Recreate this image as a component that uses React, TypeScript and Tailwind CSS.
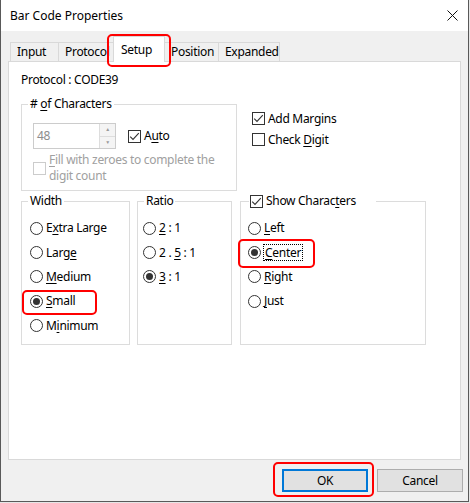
import type { ReactNode } from "react";

const CheckBox = ({ checked = false, disabled = false }: { checked?: boolean; disabled?: boolean }) => (
  <span
    className={`flex h-[13px] w-[13px] shrink-0 items-center justify-center border bg-white ${
      disabled ? "border-[#cccccc]" : "border-[#333333]"
    }`}
  >
    {checked && (
      <svg width="11" height="11" viewBox="0 0 11 11">
        <polyline points="1.2,5.6 4,8.4 9.8,2.2" fill="none" stroke="#333" strokeWidth="1.1" />
      </svg>
    )}
  </span>
);

const Radio = ({ on = false }: { on?: boolean }) => (
  <span className="flex h-[13px] w-[13px] shrink-0 items-center justify-center rounded-full border border-[#333333] bg-white">
    {on && <span className="h-[7px] w-[7px] rounded-full bg-[#333333]" />}
  </span>
);

const U = ({ children }: { children: ReactNode }) => (
  <span className="underline decoration-1 underline-offset-[2px]">{children}</span>
);

const RadioRow = ({ on, children }: { on?: boolean; children: ReactNode }) => (
  <div className="flex h-[24.4px] items-center gap-[3px]">
    <Radio on={on} />
    <span>{children}</span>
  </div>
);

const RedBox = ({ className }: { className: string }) => (
  <div className={`pointer-events-none absolute rounded-[5px] border-2 border-[#ff0000] ${className}`} />
);

const Tab = ({ label, className }: { label: string; className: string }) => (
  <div
    className={`flex h-[19px] items-center overflow-hidden whitespace-nowrap border-l border-t border-[#d9d9d9] bg-[#f0f0f0] pl-[6px] ${className}`}
  >
    {label}
  </div>
);

export default function App() {
  return (
    <div className="relative h-[503px] w-[470px] bg-[#e6e6e6] font-['Segoe_UI','Noto_Sans',sans-serif] text-[12px] leading-[16px] text-black">
      <div className="flex h-[502px] w-[469px] flex-col border-x border-b border-[#595959] bg-[#f0f0f0]">
        {/* title bar */}
        <div className="flex h-[31px] shrink-0 items-center justify-between bg-white pl-[9px] pr-[10px]">
          <span>Bar Code Properties</span>
          <svg width="11" height="11" viewBox="0 0 11 11">
            <path d="M0.5 0.5 L10.5 10.5 M10.5 0.5 L0.5 10.5" stroke="#111" strokeWidth="1" />
          </svg>
        </div>

        <div className="flex flex-col tracking-[-0.3px]">
          {/* tabs */}
          <div className="ml-[9px] mt-[5px] flex h-[25px] items-end">
            <Tab label="Input" className="w-[48px]" />
            <Tab label="Protocol" className="w-[55px]" />
            <div className="relative z-10 mb-[-1px] flex h-[26px] w-[52px] items-start border-x border-t border-[#d9d9d9] bg-white pl-[7px] pt-[5px]">
              Setup
            </div>
            <Tab label="Position" className="w-[53px] border-l-0" />
            <Tab label="Expanded" className="w-[62px] border-r" />
          </div>

          {/* panel */}
          <div className="ml-[7px] flex h-[399px] w-[453px] flex-col border border-[#d9d9d9] bg-white pl-[12px] pt-[10px]">
            <div>Protocol : CODE39</div>

            <div className="mt-[8px] flex">
              <fieldset className="h-[95px] w-[216px] border border-[#dcdcdc]">
                <legend className="ml-[6px] px-[2px]">
                  # <U>o</U>f Characters
                </legend>
                <div className="pl-[11px] pt-[11px]">
                  <div className="flex items-center">
                    <div className="flex h-[26px] w-[83px] border border-[#cccccc] bg-white">
                      <span className="flex-1 pl-[3px] pt-[4px] text-[#8d8d8d]">48</span>
                      <div className="flex w-[16px] flex-col border-l border-[#dddddd] bg-[#f4f4f4]">
                        <div className="flex flex-1 items-center justify-center border-b border-[#dddddd] text-[5px] leading-none text-[#9a9a9a]">
                          ▲
                        </div>
                        <div className="flex flex-1 items-center justify-center text-[5px] leading-none text-[#9a9a9a]">
                          ▼
                        </div>
                      </div>
                    </div>
                    <div className="ml-[12px] flex items-center gap-[3px]">
                      <CheckBox checked />
                      <span>
                        A<U>u</U>to
                      </span>
                    </div>
                  </div>
                  <div className="mt-[3px] flex items-center gap-[3px] text-[#a0a0a0]">
                    <CheckBox disabled />
                    <div className="flex flex-col leading-[16px]">
                      <span>
                        <U>F</U>ill with zeroes to complete the
                      </span>
                      <span>digit count</span>
                    </div>
                  </div>
                </div>
              </fieldset>

              <div className="ml-[15px] flex flex-col pt-[12px]">
                <div className="flex h-[21px] items-center gap-[3px]">
                  <CheckBox checked />
                  <span>Add Margins</span>
                </div>
                <div className="flex h-[21px] items-center gap-[3px]">
                  <CheckBox />
                  <span>
                    Check <U>D</U>igit
                  </span>
                </div>
              </div>
            </div>

            <div className="mt-[2px] flex">
              <fieldset className="h-[152px] w-[109px] border border-[#dcdcdc]">
                <legend className="ml-[6px] px-[2px]">Width</legend>
                <div className="pl-[8px] pt-[7px]">
                  <RadioRow>
                    E<U>x</U>tra Large
                  </RadioRow>
                  <RadioRow>
                    Larg<U>e</U>
                  </RadioRow>
                  <RadioRow>
                    <U>M</U>edium
                  </RadioRow>
                  <RadioRow on>
                    <U>S</U>mall
                  </RadioRow>
                  <RadioRow>
                    M<U>i</U>nimum
                  </RadioRow>
                </div>
              </fieldset>

              <fieldset className="ml-[7px] h-[152px] w-[95px] border border-[#dcdcdc]">
                <legend className="ml-[6px] px-[2px]">Ratio</legend>
                <div className="pl-[5px] pt-[7px]">
                  <RadioRow>
                    <U>2</U> : 1
                  </RadioRow>
                  <RadioRow>
                    2 . <U>5</U> : 1
                  </RadioRow>
                  <RadioRow on>
                    <U>3</U> : 1
                  </RadioRow>
                </div>
              </fieldset>

              <fieldset className="ml-[8px] h-[152px] w-[186px] border border-[#dcdcdc]">
                <legend className="ml-[8px] pl-[1px] pr-[20px]">
                  <span className="flex items-center gap-[3px]">
                    <CheckBox checked />
                    <span>
                      Show Charac<U>t</U>ers
                    </span>
                  </span>
                </legend>
                <div className="pl-[7px] pt-[7px]">
                  <RadioRow>
                    <U>L</U>eft
                  </RadioRow>
                  <div className="flex h-[24.4px] items-center gap-[2px]">
                    <Radio on />
                    <span className="border border-dotted border-black px-[1px] leading-[15px]">
                      <U>C</U>enter
                    </span>
                  </div>
                  <RadioRow>
                    <U>R</U>ight
                  </RadioRow>
                  <RadioRow>
                    <U>J</U>ust
                  </RadioRow>
                </div>
              </fieldset>
            </div>
          </div>

          {/* buttons */}
          <div className="mt-[9px] flex justify-end gap-[9px] pr-[5px]">
            <button className="flex h-[23px] w-[86px] items-center justify-center border-2 border-[#0078d7] bg-[#e1e1e1]">
              OK
            </button>
            <button className="flex h-[23px] w-[86px] items-center justify-center border border-[#adadad] bg-[#e1e1e1]">
              Cancel
            </button>
          </div>
        </div>
      </div>

      <RedBox className="left-[107px] top-[34px] h-[33px] w-[64px]" />
      <RedBox className="left-[22px] top-[290px] h-[25px] w-[75px]" />
      <RedBox className="left-[238px] top-[239px] h-[29px] w-[77px]" />
      <RedBox className="left-[273px] top-[462px] h-[35px] w-[101px]" />
    </div>
  );
}
